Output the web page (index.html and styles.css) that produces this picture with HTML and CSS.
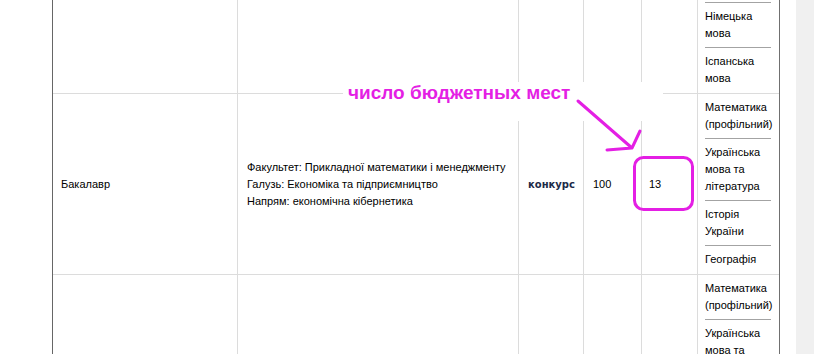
FILE: index.html
```html
<!DOCTYPE html>
<html lang="uk">
<head>
<meta charset="utf-8">
<title>Конкурсні пропозиції</title>
<link rel="stylesheet" href="styles.css">
</head>
<body>
<div class="page">
  <div class="spacer"></div>
  <div class="frame">
    <table class="grid">
      <colgroup>
        <col class="c-level">
        <col class="c-info">
        <col class="c-kind">
        <col class="c-num">
        <col class="c-budget">
        <col class="c-subj">
      </colgroup>
      <tr>
        <td></td>
        <td></td>
        <td></td>
        <td></td>
        <td></td>
        <td class="subjects cut">
          <div class="subj">Німецька мова</div>
          <div class="subj">Іспанська мова</div>
        </td>
      </tr>
      <tr>
        <td class="level"><div class="level-text">Бакалавр</div></td>
        <td class="info">
          <div>Факультет: Прикладної математики і менеджменту</div>
          <div>Галузь: Економіка та підприємництво</div>
          <div>Напрям: економічна кібернетика</div>
        </td>
        <td class="kind">конкурс</td>
        <td class="num">100</td>
        <td class="budget">13</td>
        <td class="subjects">
          <div class="subj">Математика (профільний)</div>
          <div class="subj">Українська мова та література</div>
          <div class="subj">Історія України</div>
          <div class="subj">Географія</div>
        </td>
      </tr>
      <tr>
        <td></td>
        <td></td>
        <td></td>
        <td></td>
        <td></td>
        <td class="subjects">
          <div class="subj">Математика (профільний)</div>
          <div class="subj">Українська мова та література</div>
          <div class="subj">Історія України</div>
        </td>
      </tr>
    </table>
  </div>
  <div class="gap"></div>
  <div class="gutter"></div>

  <div class="note">число бюджетных мест</div>
  <svg class="marks" width="814" height="354" viewBox="0 0 814 354" aria-hidden="true">
    <path d="M578 101 L632 148 M640 131 L632 148 L607 150" fill="none" stroke="#e41fe4" stroke-width="3" stroke-linecap="round" stroke-linejoin="round"/>
    <rect x="634.5" y="157.5" width="58" height="52" rx="9" ry="9" fill="none" stroke="#e41fe4" stroke-width="3"/>
  </svg>
</div>
</body>
</html>
```

FILE: styles.css
```css
html, body {
  margin: 0;
  padding: 0;
  background: #ffffff;
  overflow: hidden;
}

.page {
  position: relative;
  display: flex;
  width: 814px;
  height: 354px;
  overflow: hidden;
  font-family: "Liberation Sans", Tahoma, Arial, sans-serif;
  font-size: 11px;
  color: #000;
}

.spacer {
  width: 52px;
  flex: none;
}

.frame {
  flex: none;
  width: 726px;
  border-left: 1px solid #666666;
  border-right: 1px solid #707070;
  align-self: flex-start;
  min-height: 400px;
}

.grid {
  width: 726px;
  table-layout: fixed;
  border-collapse: separate;
  border-spacing: 0;
}

.c-level { width: 185px; }
.c-info { width: 281px; }
.c-kind { width: 65px; }
.c-num { width: 58px; }
.c-budget { width: 56px; }
.c-subj { width: 81px; }

.grid td {
  padding: 0;
  border-right: 1px solid #dcdcdc;
  border-bottom: 1px solid #dcdcdc;
  vertical-align: middle;
  line-height: 17px;
}

.grid td.subjects {
  border-right: none;
  padding: 0 0 1px 7px;
  vertical-align: top;
}

.grid td.subjects.cut {
  padding-top: 2px;
}

.subj {
  width: 66px;
  padding: 5px 0;
  line-height: 17px;
}

.subj + .subj,
.cut .subj:first-child {
  border-top: 1px solid #a3a3a3;
}

.grid td.level {
  padding-left: 8px;
  vertical-align: middle;
}

.level-text {
  display: block;
  line-height: 17px;
}

.grid td.info {
  padding-left: 9px;
  white-space: nowrap;
}

.grid td.kind {
  padding-left: 9px;
  font-family: "DejaVu Sans", Tahoma, sans-serif;
  font-size: 10px;
  font-weight: bold;
  color: #1c2a48;
}

.grid td.num {
  padding-left: 9px;
}

.grid td.budget {
  padding-left: 7px;
}

.gap {
  width: 16px;
  flex: none;
}

.gutter {
  width: 18px;
  flex: none;
  background: #f0f0f0;
}

.note {
  position: absolute;
  left: 343px;
  top: 82px;
  width: 315px;
  height: 39px;
  padding-left: 5px;
  background: #ffffff;
  font-family: "Liberation Sans", Arial, sans-serif;
  font-weight: bold;
  font-size: 19px;
  line-height: 22px;
  color: #e41fe4;
}

.marks {
  position: absolute;
  left: 0;
  top: 0;
  pointer-events: none;
}
```
